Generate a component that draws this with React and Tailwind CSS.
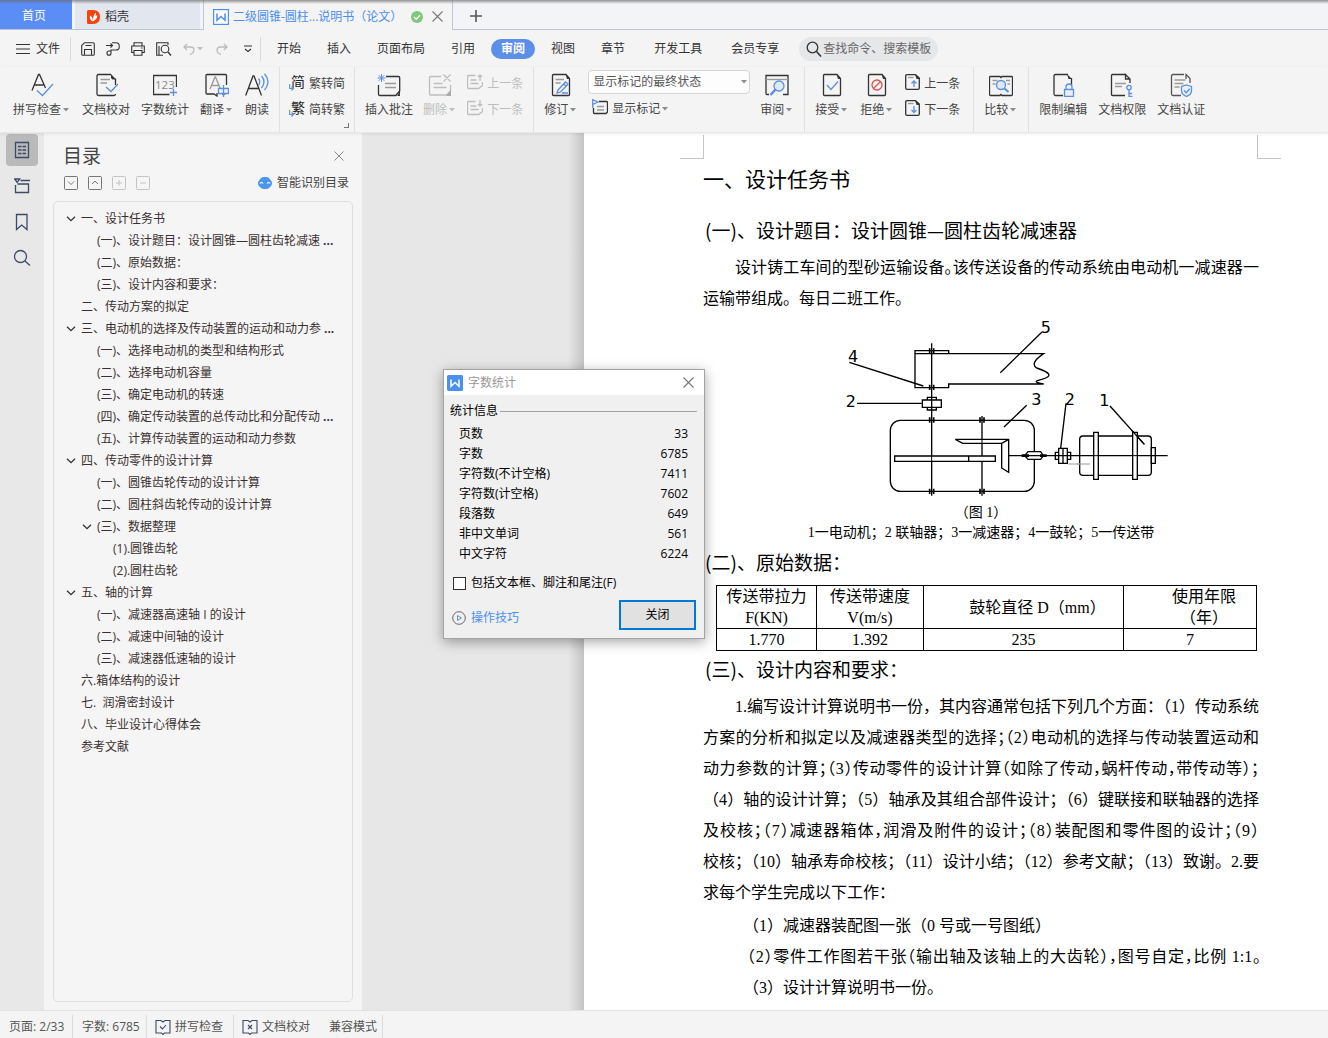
import React from "react";

const UI = "font-['Open_Sans','Noto_Sans_CJK_SC',sans-serif]";
const DARK = "#333";
const GRAY = "#9a9a9a";
const BLUE = "#5b8fe0";

function Svg({ w = 24, h = 24, children, className = "" }) {
  return (
    <svg width={w} height={h} viewBox={`0 0 ${w} ${h}`} fill="none" stroke={DARK} strokeWidth="1.3" aria-hidden="true" className={`shrink-0 ${className}`}>
      {children}
    </svg>
  );
}

function Caret({ muted }) {
  return (
    <span className="flex w-[10px] justify-center">
      <svg width="6" height="4" viewBox="0 0 6 4" aria-hidden="true"><path d="M0 0h6L3 3.5z" fill={muted ? "#c0c0c0" : "#8c8c8c"} /></svg>
    </span>
  );
}

function PageOutline({ x = 3, w = 18, color = DARK }) {
  const r = x + w;
  return (
    <>
      <path d={`M${r - 4} 1.5H${x + 1.5}q-1 0-1 1v19q0 1 1 1H${r - 1.5}q1 0 1-1V5.5z`} stroke={color} />
      <path d={`M${r - 4.5} 1l4.5 5h-3q-1.500-1.500z`} fill={color} stroke="none" />
    </>
  );
}

const icons = {
  spell: <Svg><path d="M2 17.500 8.500 1.500h1L15.500 15M4.500 12h9" /><path d="m7 17.500 5.500 5L23 11" stroke={BLUE} /></Svg>,
  proof: <Svg><path d="M17 1.500H4.500q-1.500 0-1.500 1.500v18q0 1.500 1.500 1.500H20q1.500 0 1.500-1.500M21.500 12V5.500" /><path d="m17 1 5 5.500h-3.500L17 5z" fill={DARK} stroke="none" /><path d="M6.500 6.500H16M6.500 10H13" stroke={GRAY} /><path d="m12 14 5 4.500 7-7.500" stroke={BLUE} /></Svg>,
  count: (
    <Svg><path d="M23.500 14V2.500h-23v19h16" /><text x="2" y="15.500" fontSize="11.500" fill="#8a8a8a" stroke="none" fontFamily="Open Sans, sans-serif">123</text><path d="M20.500 16v7M17 19.500h7" stroke={BLUE} /></Svg>
  ),
  translate: (
    <Svg><path d="M21.500 12V2.500q0-1-1-1H2q-1 0-1 1V20q0 1 1 1h7l3 2v-3M17 21h3" /><path d="m5 16 5-12h.500l4.500 11M6.500 12.500h7" stroke={GRAY} /><path d="M13.500 15.500h10v5h-10zM18.500 12v12" stroke={BLUE} /></Svg>
  ),
  read: <Svg><path d="M.7 22.500 8 3h1l7.500 19.500M3.500 15.500h10" /><path d="M13.500 5.500q2.500 3 0 7M16.500 3q5 5.500 0 12M19.500.7q7 8 0 16.500" stroke={BLUE} /></Svg>,
  addNote: <Svg><path d="M9 3.500h12.500q1.200 0 1.200 1.200V18l-4 4.500H3q-1.500 0-1.500-1.500v-9" /><path d="M23 17.500v5.500h-5q4 0 3.500-3.500z" fill={DARK} stroke="none" /><path d="M8 10.500h11M8 14.500h11" stroke={GRAY} /><path d="M4.500 1v8M.5 5h8M1.700 2.200l5.600 5.600M7.300 2.200 1.700 7.800" stroke={BLUE} strokeWidth="1" /></Svg>,
  del: <Svg><g stroke="#bdbdbd"><path d="M13 3.500H2.500q-1 0-1 1V21q0 1 1 1h16l4-4v-6M5.500 10.500h9M5.500 14.500h13M15.500 1.500l7 7M22.500 1.500l-7 7" /></g><path d="M23 17v6h-5z" fill="#aaa" stroke="none" /></Svg>,
  revise: <Svg><PageOutline /><path d="M6.500 6.500H15M6.500 10h5" stroke={GRAY} /><path d="m9 17 7.500-8 2.500 2.300L11.500 19l-3.500 1zM14.700 11l2.500 2.300M13 20h6" stroke={BLUE} /></Svg>,
  review: <Svg><path d="M4 21.500H2q-1 0-1-1v-18h22v19h-5" /><path d="M1 6.500h22" stroke={GRAY} /><circle cx="14" cy="13" r="5" stroke={BLUE} fill="#dfe9f8" /><path d="m10.500 16.500-5 5.500" stroke={BLUE} strokeWidth="2.500" /></Svg>,
  accept: <Svg><PageOutline /><path d="m7 12 4 4.500 7-8" stroke={BLUE} /></Svg>,
  reject: <Svg><PageOutline /><circle cx="12" cy="12" r="5" stroke="#d9534f" /><path d="m8.500 15.500 7-7" stroke="#d9534f" /></Svg>,
  compare: <Svg><path d="M11 3.500l1 1 1-1h9.500q1 0 1 1v17q0 1-1 1H13l-1-1-1 1H1.500q-1 0-1-1v-17q0-1 1-1z" /><path d="M3.500 7.500h5M3.500 11h3M17 7.500h4M18.500 11h2.500" stroke={GRAY} /><circle cx="12" cy="12" r="4.500" stroke={BLUE} fill="#dfe9f8" /><path d="m15.500 15.500 4 3.500" stroke={BLUE} strokeWidth="2" /></Svg>,
  restrict: <Svg><path d="M17 1.500H4.500q-1.500 0-1.500 1.500v18q0 1.500 1.500 1.500H12M20.500 12V5" /><path d="m16 1 5 5h-3.500z" fill={DARK} stroke="none" /><path d="M13.500 16.500h9v7h-9zM15 16.500v-2.500q0-3 3-3t3 3v2.500" stroke={BLUE} fill="#eaf1fb" /></Svg>,
  rights: <Svg><path d="M15 1.500H2.500q-1 0-1 1v19q0 1 1 1H15M20 10V6l-4.500-4.500V6H20" /><path d="M5 10.500h11M5 13.500h7" stroke={GRAY} /><circle cx="19" cy="14.500" r="2.200" stroke={BLUE} /><path d="M19 17v6.500h3.500M19 20.500h3" stroke={BLUE} /></Svg>,
  certify: <Svg><path d="M15 1.500H4q-1.500 0-1.500 1.500v18q0 1.500 1.500 1.500h8M21 10V5.500L17 1.500V6" stroke="#555" /><path d="M5.500 7h11M5.500 10.500h9M5.500 14h5" stroke={GRAY} /><path d="m17.500 12 5 1.500v4q0 4-5 6-5-2-5-6v-4z" stroke={BLUE} fill="#eaf1fb" /><path d="m15 17.500 2.200 2.200 3.500-4" stroke={BLUE} /></Svg>,
};

function BigButton({ icon, label, caret, muted }) {
  return (
    <button className={`flex shrink-0 flex-col items-center gap-[3px] ${muted ? "text-[#bdbdbd]" : "text-[#444]"}`}>
      {icons[icon]}
      <span className="flex items-center whitespace-nowrap text-xs leading-5">{label}{caret && <Caret muted={muted} />}</span>
    </button>
  );
}

function SmallButton({ icon, label, caret, muted }) {
  return (
    <button className={`flex h-[26px] items-center gap-1 whitespace-nowrap text-xs ${muted ? "text-[#bdbdbd]" : "text-[#444]"}`}>
      {icon}
      <span className="flex items-center pt-1">{label}{caret && <Caret />}</span>
    </button>
  );
}

const Sep = () => <span className="w-px self-stretch bg-[#e0e0e0]" />;

function GlyphIcon({ ch }) {
  return (
    <Svg w={16} h={18} className="overflow-visible">
      <text x="2" y="14" fontSize="14" fill="#222" stroke="none" fontFamily="Noto Sans CJK SC, sans-serif">{ch}</text>
      <path d="M.7 11v4.500H4M2.500 13.500l2 2-2 2" stroke={BLUE} strokeWidth="1.100" />
    </Svg>
  );
}

function NoteArrow({ up }) {
  return (
    <Svg w={16} h={16}>
      <g stroke="#bdbdbd"><path d="M8.500 1.500h-7q-1 0-1 1v11q0 1 1 1h10l4-3V8M3.500 6h6M3.500 9.500h8" /><path d={up ? "M13 7V1M11 3l2-2 2 2" : "M13 0v6M11 4l2 2 2-2"} /></g>
    </Svg>
  );
}

function PageArrow({ up }) {
  return (
    <Svg w={15} h={16}>
      <path d="M10.500.7H2q-1.300 0-1.300 1.300v12q0 1.300 1.300 1.300h11q1.300 0 1.300-1.300V4z" />
      <path d="m10 0 5 5h-3.500z" fill={DARK} stroke="none" />
      <path d="M3 3.500h5.500" stroke={GRAY} />
      <path d={up ? "M9 13V7M6.500 9.500 9 7l2.500 2.500" : "M9 6v6.500M6.500 10 9 12.500l2.500-2.500"} stroke={BLUE} />
    </Svg>
  );
}

function WLogo({ filled }) {
  return (
    <svg width="16" height="16" viewBox="0 0 16 16" aria-hidden="true" className="shrink-0">
      <rect x=".6" y=".6" width="14.800" height="14.800" rx={filled ? 1 : 0} fill={filled ? "#4b8ff0" : "#fff"} stroke="#4b8ff0" strokeWidth="1.200" />
      <path d="M4 4.500v6.800L8 7.500l4 3.800V4.500" fill="none" stroke={filled ? "#fff" : "#4b8ff0"} strokeWidth="1.500" />
    </svg>
  );
}

function Cross({ size = 11, color = "#777" }) {
  return <svg width={size} height={size} viewBox="0 0 11 11" stroke={color} strokeWidth="1.100" aria-hidden="true"><path d="M.5.5l10 10M10.500.5l-10 10" /></svg>;
}

function TabBar() {
  return (
    <div className="relative flex h-[30px] shrink-0 bg-[#f3f4f8] text-xs">
      <button className="mb-px w-[72px] bg-[#5b8df6] pr-1 pt-[3px] text-white">首页</button>
      <button className="ml-[3px] mb-px flex w-[125px] items-center gap-[5px] bg-[#e2e6ef] pl-3 pt-1 text-[#333]">
        <svg width="13" height="16" viewBox="0 0 13 16" aria-hidden="true"><path d="M1.500 1H6q7 0 7 7t-7 7H1.500Q0 15 0 13.500v-11Q0 1 1.500 1z" fill="#f8420b" /><path d="M5.500 12.500Q2 10 3 6.500q2.500 1 2.800 5Q6 6 9 3.500q.2 2-.6 3.300l2-.3q-.5 4.500-4.900 6z" fill="#fff" /></svg>
        稻壳
      </button>
      <div className="ml-[3px] flex w-[250px] items-center border-x border-[#c0c5da] bg-[#f4f4f4] pl-[9px] pt-[3px] text-[#4b8ff0]">
        <WLogo />
        <span className="ml-[4px] w-[170px] whitespace-nowrap">二级圆锥-圆柱...说明书（论文）</span>
        <svg width="12" height="12" viewBox="0 0 12 12" className="ml-[8px] shrink-0" aria-hidden="true"><circle cx="6" cy="6" r="6" fill="#7fc77b" /><path d="m3 6 2.200 2.300L9 4.300" fill="none" stroke="#fff" strokeWidth="1.300" /></svg>
        <button aria-label="关闭标签" className="ml-[9px]"><Cross /></button>
      </div>
      <button aria-label="新建" className="pl-[17px] pt-[2px]"><svg width="12" height="12" viewBox="0 0 12 12" stroke="#555" strokeWidth="1.600" aria-hidden="true"><path d="M6 0v12M0 6h12" /></svg></button>
      <div className="absolute inset-x-0 top-0 h-[4px] bg-linear-to-b from-[#6b6b6b]/70 to-transparent" />
      <div className="absolute bottom-0 left-0 h-px w-[204px] bg-[#bcc2d8]" />
      <div className="absolute bottom-0 left-[453px] right-0 h-px bg-[#bcc2d8]" />
    </div>
  );
}

const quick = [
  ["保存", <Svg w={14} h={14}><path d="M.7 12V3.500L3.500.7h8.500q1.300 0 1.300 1.300v10q0 1.300-1.300 1.300H2Q.7 13.300.7 12zM3.500 13V7.500h7V13M4.500 3.500h6M10.500 9.500v1" strokeWidth="1.100" /></Svg>],
  ["输出", <Svg w={14} h={14}><path d="M2 3.500H6M4.500 1.500l2 2-2 2M6 .8h4q3.300 0 3.300 3.600T10 8H5v3q0 2.300-2 2.300T1 11q0-2 2-2h2M0 3.500h2" strokeWidth="1.100" /></Svg>],
  ["打印", <Svg w={14} h={14}><path d="M3 4V.7h8V4M3 10.500H.7V4h12.600v6.500H11M3 8.500h8v4.800H3zM10 6h1.500" strokeWidth="1.100" /></Svg>],
  ["打印预览", <Svg w={16} h={14}><path d="M12 3V.7H.7v12.600H7M3 13V4" strokeWidth="1.100" /><circle cx="9" cy="7" r="3.800" strokeWidth="1.100" /><path d="m12 10 3 3.500" /></Svg>],
];
const menus = ["开始", "插入", "页面布局", "引用", "审阅", "视图", "章节"];

function MenuBar() {
  return (
    <div className="flex h-[37px] shrink-0 items-center pl-4 text-xs text-[#333]">
      <button className="flex items-center gap-[6px]"><Svg w={14} h={12}><path d="M0 1.500h14M0 6h14M0 10.500h14" strokeWidth="1" /></Svg>文件</button>
      <span className="ml-[10px] h-6 w-px bg-[#d9d9d9]" />
      <div className="ml-[10px] flex items-center gap-[11px]">
        {quick.map(([name, icon]) => <button key={name} aria-label={name}>{icon}</button>)}
        <button aria-label="撤销" className="flex items-center"><Svg w={12} h={12}><g stroke="#bcbcbc"><path d="M1 4h6.500Q11 4 11 7t-4 4.500M4 1 1 4l3 3" /></g></Svg><Caret muted /></button>
        <button aria-label="恢复"><Svg w={12} h={12}><g stroke="#bcbcbc"><path d="M11 4H4.500Q1 4 1 7t4 4.500M8 1l3 3-3 3" /></g></Svg></button>
        <button aria-label="更多" className="ml-[5px]"><Svg w={8} h={8}><path d="M0 1h8M1 4l3 2.500L7 4" strokeWidth="1.100" /></Svg></button>
      </div>
      <span className="ml-[8px] h-6 w-px bg-[#d9d9d9]" />
      <nav className="ml-[6px] flex items-center gap-[6px] pt-px">
        {menus.map((m) => (
          <button key={m} className={m === "审阅" ? "h-5 rounded-full bg-[#5b8fe8] px-[10px] font-bold text-white" : "h-5 px-[10px]"}>{m}</button>
        ))}
        <button className="ml-[3px] px-[10px]">开发工具</button>
        <button className="ml-[3px] px-[10px]">会员专享</button>
      </nav>
      <label className="ml-[10px] flex h-6 w-[139px] items-center rounded-full bg-[#e6e7e9] pl-[7px]">
        <Svg w={16} h={16}><circle cx="6.500" cy="6.500" r="5.300" /><path d="m10.500 10.500 4.500 5" strokeWidth="1.600" /></Svg>
        <input aria-label="查找命令" placeholder="查找命令、搜索模板" className="w-28 bg-transparent pl-px text-xs outline-none placeholder:text-[#666]" />
      </label>
    </div>
  );
}

function Ribbon() {
  return (
    <div className="relative z-10 flex h-[66px] shrink-0 border-b border-[#e8e8e8] bg-[#f4f4f4] shadow-[0_1px_3px_rgba(0,0,0,0.08)]">
      <div className="flex items-start gap-[11px] pl-[13px] pr-[10px] pt-[6px]">
        <BigButton icon="spell" label="拼写检查" caret /><BigButton icon="proof" label="文档校对" /><BigButton icon="count" label="字数统计" /><BigButton icon="translate" label="翻译" caret /><BigButton icon="read" label="朗读" />
      </div>
      <Sep />
      <div className="relative flex flex-col pl-[9px] pr-[9px] pt-[2px]">
        <SmallButton icon={<GlyphIcon ch="简" />} label="繁转简" />
        <SmallButton icon={<GlyphIcon ch="繁" />} label="简转繁" />
        <span className="absolute bottom-[4px] right-[5px] h-[5px] w-[5px] border-b border-r border-[#777]" />
      </div>
      <Sep />
      <div className="flex items-start gap-[10px] pl-[10px] pr-[10px] pt-[6px]">
        <BigButton icon="addNote" label="插入批注" /><BigButton icon="del" label="删除" caret muted />
        <div className="-mt-1 flex flex-col"><SmallButton icon={<NoteArrow up />} label="上一条" muted /><SmallButton icon={<NoteArrow />} label="下一条" muted /></div>
      </div>
      <Sep />
      <div className="flex items-start gap-[10px] px-[10px] pt-[6px]">
        <BigButton icon="revise" label="修订" caret />
        <div className="-mt-[3px] flex flex-col">
          <span className="relative flex items-center">
            <select aria-label="标记显示状态" className="h-6 w-[162px] appearance-none rounded border border-[#d5d5d5] bg-[#fdfdfd] px-1 text-xs text-[#555]"><option>显示标记的最终状态</option></select>
            <span className="pointer-events-none absolute right-px"><Caret /></span>
          </span>
          <span className="pl-1"><SmallButton icon={<Svg w={16} h={16}><path d="M7 2.500h7.500q1 0 1 1V13l-1.500 1.500H2.500q-1 0-1-1V9" /><path d="M5 7.500h7M5 11h7" stroke={GRAY} /><path d="M.7 9V.7L6 3 .7 5.500" stroke={BLUE} /></Svg>} label="显示标记" caret /></span>
        </div>
        <BigButton icon="review" label="审阅" caret />
      </div>
      <Sep />
      <div className="flex items-start gap-[11px] pl-[10px] pr-[13px] pt-[6px]">
        <BigButton icon="accept" label="接受" caret /><BigButton icon="reject" label="拒绝" caret />
        <div className="-mt-1 flex flex-col"><SmallButton icon={<PageArrow up />} label="上一条" /><SmallButton icon={<PageArrow />} label="下一条" /></div>
      </div>
      <Sep />
      <div className="flex items-start px-[10px] pt-[6px]"><BigButton icon="compare" label="比较" caret /></div>
      <Sep />
      <div className="flex items-start gap-[11px] px-[10px] pt-[6px]"><BigButton icon="restrict" label="限制编辑" /><BigButton icon="rights" label="文档权限" /><BigButton icon="certify" label="文档认证" /></div>
    </div>
  );
}

function Rail() {
  const s = "#3d4a66";
  return (
    <div className="flex w-11 shrink-0 flex-col items-center gap-1 bg-[#e8e8e8] pt-px">
      <button aria-label="目录" className="flex h-8 w-8 items-center justify-center rounded bg-[#bababa]"><Svg w={16} h={18}><g stroke={s}><path d="M1.500 1.500h13v15h-13zM4 5.500h3.500M8.500 5.500H12M4 9h3.500M8.500 9H12M4 12.500h3.500M8.500 12.500H12" /></g></Svg></button>
      <button aria-label="章节" className="flex h-8 w-8 items-center justify-center"><Svg w={16} h={16}><g stroke={s}><path d="M6.500 2.500H16M1.500 7v7.500h13V6h-11M.7 1h5L3.200 4.500z" /></g></Svg></button>
      <button aria-label="书签" className="flex h-8 w-8 items-center justify-center"><Svg w={14} h={18}><path d="M1.500 1.500h10.500v15L6.700 12 1.500 16.500z" stroke={s} /></Svg></button>
      <button aria-label="查找" className="flex h-8 w-8 items-center justify-center"><Svg w={18} h={18}><g stroke={s}><circle cx="7.500" cy="7.500" r="6" /><path d="m12 12 5 4.500" /></g></Svg></button>
    </div>
  );
}

const toc = [
  [0, 1, "一、设计任务书"], [1, 0, "(一)、设计题目：设计圆锥—圆柱齿轮减速", 1], [1, 0, "(二)、原始数据："], [1, 0, "(三)、设计内容和要求："],
  [0, 0, "二、传动方案的拟定"], [0, 1, "三、电动机的选择及传动装置的运动和动力参", 1], [1, 0, "(一)、选择电动机的类型和结构形式"], [1, 0, "(二)、选择电动机容量"],
  [1, 0, "(三)、确定电动机的转速"], [1, 0, "(四)、确定传动装置的总传动比和分配传动", 1], [1, 0, "(五)、计算传动装置的运动和动力参数"], [0, 1, "四、传动零件的设计计算"],
  [1, 0, "(一)、圆锥齿轮传动的设计计算"], [1, 0, "(二)、圆柱斜齿轮传动的设计计算"], [1, 1, "(三)、数据整理"], [2, 0, "(1).圆锥齿轮"], [2, 0, "(2).圆柱齿轮"],
  [0, 1, "五、轴的计算"], [1, 0, "(一)、减速器高速轴 I 的设计"], [1, 0, "(二)、减速中间轴的设计"], [1, 0, "(三)、减速器低速轴的设计"],
  [0, 0, "六.箱体结构的设计"], [0, 0, "七.  润滑密封设计"], [0, 0, "八、毕业设计心得体会"], [0, 0, "参考文献"],
];
const indent = ["pl-3", "pl-7", "pl-11"];
const tools = [["展开", "m4 5.500 3 3 3-3"], ["收起", "m4 8 3-3 3 3"], ["升级", "M7 4v6M4 7h6", 1], ["降级", "M4 7h6", 1]];

function Outline() {
  return (
    <aside className="flex w-[318px] shrink-0 flex-col bg-[#f5f5f5] px-[9px] pb-[8px]">
      <div className="flex h-[39px] items-end justify-between pl-[10px] pr-[9px]">
        <h2 className="text-[19px] leading-8 text-[#444]">目录</h2>
        <button aria-label="关闭目录" className="pb-[11px]"><Cross size={10} color="#888" /></button>
      </div>
      <div className="flex h-[29px] items-center justify-between pl-[11px] pr-[4px] pb-2">
        <div className="flex gap-[10px]">
          {tools.map(([n, d, m]) => <button key={n} aria-label={n}><Svg w={14} h={14}><g stroke={m ? "#c4c4c4" : "#777"} strokeWidth="1"><rect x=".5" y=".5" width="13" height="13" rx="1" /><path d={d} /></g></Svg></button>)}
        </div>
        <button className="flex items-center gap-1 text-xs text-[#444]">
          <svg width="16" height="14" viewBox="0 0 16 14" aria-hidden="true"><rect x="3" y="1" width="10" height="12" rx="4" fill="#4a97ee" /><rect x="1" y="2.500" width="14" height="9.500" rx="4.700" fill="#4a97ee" /><path d="M3 7.500q1.500-2 3 0M10 7.500q1.500-2 3 0" stroke="#fff" fill="none" strokeWidth="1.200" /></svg>
          智能识别目录
        </button>
      </div>
      <ul className="flex-1 rounded-[5px] border border-[#dedede] pt-[6px] text-xs text-[#3a3030]">
        {toc.map(([level, open, text, cut], i) => (
          <li key={i} className={`flex h-[22px] items-center whitespace-pre ${indent[level]}`}>
            <span className="flex w-[15px] items-center">{open ? <Svg w={10} h={6}><path d="m1 .7 4 4 4-4" /></Svg> : null}</span>
            <a href="#" className="flex items-center">{text}{cut ? <b className="pl-[3px]">...</b> : null}</a>
          </li>
        ))}
      </ul>
    </aside>
  );
}

function Drawing() {
  return (
    <svg width="325" height="180" viewBox="465 24 975 540" fill="none" stroke="#000" strokeWidth="4" role="img" aria-label="传动系统简图" className="ml-[142px] block">
      <g fill="#000" stroke="none" fontSize="48" fontFamily="DejaVu Sans, sans-serif">
        <text x="1052" y="68">5</text><text x="474" y="156">4</text><text x="467" y="292">2</text><text x="1024" y="285">3</text><text x="1124" y="285">2</text><text x="1228" y="288">1</text>
      </g>
      <path d="M1056 66 931 188M478 157 700 228M501 280H695M1010 286 942 351M1128 280 1112 415M1260 288 1363 403" />
      <path d="M776 131V122H675V233H776V222H1061M675 131H1061Q1018 160 1040 174Q1105 195 1055 208Q1020 216 1061 222" />
      <path d="M725 100V557M876 318V557" />
      <path d="M697 270H754V292H697zM712 262H739V270H712zM712 292H739V300H712z" />
      <rect x="601" y="331" width="432" height="213" rx="30" />
      <path d="M614 438H916V454H614zM836 438V454" fill="#fff" />
      <path d="M796 388H956V487L935 474V400H818zM935 400 956 388" fill="#fff" />
      <path d="M876 388V400M725 438V454" strokeWidth="3" />
      <path d="M719 115v16m0 93v16m0 82v16m0 198v16M731 115v16m0 93v16m0 82v16m0 198v16M870 322v16m0 198v16M882 322v16m0 198v16" strokeWidth="5" />
      <path d="M1014 425H1052L1060 437 1052 448H1014L1004 437z" fill="#fff" />
      <path d="M995 437h22M1050 437h20" strokeWidth="8" />
      <path d="M956 437H1433" />
      <path d="M1106 415H1132V460H1106zM1119 415V460M1096 427H1106V448H1096zM1132 427H1142V448H1132z" />
      <rect x="1169" y="378" width="215" height="118" rx="10" />
      <path d="M1384 413H1396V460H1384z" />
      <path d="M1211 367H1225V508H1211zM1328 367H1342V508H1328z" fill="#fff" />
      <path d="M1211 437h14M1328 437h14" strokeWidth="3" />
      <path d="M1326 362 1363 403" />
      <path d="M1135 462H1200M1162 462h10" stroke="#999" strokeWidth="3" />
    </svg>
  );
}

const halt = "[font-feature-settings:'halt'] [text-spacing-trim:space-all]";
const Full = ({ children, first, tight }) => <span className={`block whitespace-nowrap [text-align-last:justify] ${tight ? halt : ""} ${first ? "pl-8" : ""}`}>{children}</span>;
const H2 = ({ n, children, className }) => (
  <h2 className={`h-[31px] whitespace-nowrap pl-[2px] font-['Noto_Sans_CJK_SC',sans-serif] text-[19px] leading-[27px] ${className}`}>({n})、{children}</h2>
);
const cell = "border border-black p-0 text-center align-middle font-normal";

function Page() {
  return (
    <article className="min-w-0 flex-1 overflow-hidden bg-white pl-[96px] font-['Liberation_Serif','Noto_Sans_CJK_SC',serif] text-base leading-[31px] text-black">
      <div className="mt-[2px] flex h-6 justify-between pr-[47px]">
        <span className="w-6 border-b border-r border-[#c4c4c4]" /><span className="w-6 border-b border-l border-[#c4c4c4]" />
      </div>
      <div className="ml-[23px] w-[556px]">
        <h1 className="h-[42px] text-[21px] leading-[42px]">一、设计任务书</h1>
        <H2 n="一" className="mt-[15px]">设计题目：设计圆锥—圆柱齿轮减速器</H2>
        <p className="mt-[5px]"><Full first tight>设计铸工车间的型砂运输设备。该传送设备的传动系统由电动机一减速器一</Full>运输带组成。每日二班工作。</p>
        <figure className="mt-1">
          <Drawing />
          <figcaption className="mt-[5px] text-center text-sm leading-5"><span>（图 1）</span><br />1一电动机；2 联轴器；3一减速器；4一鼓轮；5一传送带</figcaption>
        </figure>
        <H2 n="二" className="mt-[5px]">原始数据：</H2>
        <table className="ml-[13px] mt-[6px] w-[540px] table-fixed border-collapse leading-[21px]">
          <colgroup><col className="w-[100px]" /><col className="w-[107px]" /><col className="w-[200px]" /><col className="w-[133px]" /></colgroup>
          <thead><tr className="h-[42px]"><th className={cell}>传送带拉力<br />F(KN)</th><th className={cell}>传送带速度<br />V(m/s)</th><th className={`${cell} pl-7`}>鼓轮直径 D（mm）</th><th className={`${cell} pl-7`}>使用年限<br />（年）</th></tr></thead>
          <tbody><tr className="h-[21px]"><td className={cell}>1.770</td><td className={cell}>1.392</td><td className={cell}>235</td><td className={cell}>7</td></tr></tbody>
        </table>
        <H2 n="三" className="mt-1">设计内容和要求：</H2>
        <p className="mt-[5px]">
          <Full first>1.编写设计计算说明书一份，其内容通常包括下列几个方面：（1）传动系统</Full>
          <Full tight>方案的分析和拟定以及减速器类型的选择；（2）电动机的选择与传动装置运动和</Full>
          <Full tight>动力参数的计算；（3）传动零件的设计计算（如除了传动，蜗杆传动，带传动等）；</Full>
          <Full>（4）轴的设计计算；（5）轴承及其组合部件设计；（6）键联接和联轴器的选择</Full>
          <Full tight>及校核；（7）减速器箱体，润滑及附件的设计；（8）装配图和零件图的设计；（9）</Full>
          <Full>校核；（10）轴承寿命校核；（11）设计小结；（12）参考文献；（13）致谢。2.要</Full>
          求每个学生完成以下工作：
        </p>
        <ol className="mt-[2px] whitespace-nowrap pl-10">
          <li>（1）减速器装配图一张（0 号或一号图纸）</li>
          <li className={`ml-1 w-[514px] [text-align-last:justify] ${halt}`}>（2）零件工作图若干张（输出轴及该轴上的大齿轮），图号自定，比例 1:1。</li>
          <li>（3）设计计算说明书一份。</li>
        </ol>
      </div>
    </article>
  );
}

const stats = [["页数", 33], ["字数", 6785], ["字符数(不计空格)", 7411], ["字符数(计空格)", 7602], ["段落数", 649], ["非中文单词", 561], ["中文字符", 6224]];

function Dialog() {
  return (
    <div role="dialog" aria-label="字数统计" className="absolute left-[443px] top-[369px] z-20 w-[262px] border border-[#a3a3a3] bg-[#f0f0f0] pb-2 text-xs text-black shadow-[0_3px_12px_rgba(0,0,0,0.35)]">
      <div className="flex h-[25px] items-center bg-white pl-[3px] pr-[10px] text-[#999]"><WLogo filled /><span className="ml-[5px] flex-1">字数统计</span><button aria-label="关闭窗口"><Cross /></button></div>
      <div className="mt-[6px] flex h-5 items-center gap-[2px] pl-[6px] pr-[7px]">统计信息<span className="h-px flex-1 bg-[#a0a0a0]" /></div>
      <dl className="mt-[3px] pl-[15px] pr-[16px]">
        {stats.map(([k, v]) => <div key={k} className="flex h-5 items-center justify-between"><dt>{k}</dt><dd>{v}</dd></div>)}
      </dl>
      <label className="mt-[9px] flex h-5 items-center gap-[5px] pl-[9px]"><input type="checkbox" className="h-[13px] w-[13px] appearance-none border border-[#333] bg-white" />包括文本框、脚注和尾注(F)</label>
      <div className="mt-[7px] flex items-center justify-between pl-[8px] pr-[8px]">
        <a href="#" className="flex items-center gap-[5px] pt-[6px] text-[#4b8ff0]"><Svg w={14} h={14}><circle cx="7" cy="7" r="6.300" stroke="#666" strokeWidth="1" /><path d="M5.500 4.500v5L9.500 7z" stroke={BLUE} strokeWidth="1" /></Svg>操作技巧</a>
        <button className="h-[30px] w-[77px] border-2 border-[#0078d7] bg-[#e1e1e1]">关闭</button>
      </div>
    </div>
  );
}

function BookIcon({ d }) {
  return <Svg w={16} h={16}><g stroke="#3d4a66" strokeWidth="1.100"><path d="M6 1.500H1v12.500h5.500L8 15.500 9.500 14H15V1.500h-5L8 3z" /><path d={d} /></g></Svg>;
}

function StatusBar() {
  const item = "flex items-center gap-1 border-r border-[#dcdcdc]";
  return (
    <footer className="flex h-[28px] shrink-0 items-stretch border-t border-[#e2e2e2] bg-[#f4f4f4] pt-1 text-xs text-[#555]">
      <span className={`${item} w-[73px] pl-[9px]`}>页面: 2/33</span>
      <span className={`${item} w-[74px] pl-[9px]`}>字数: 6785</span>
      <button className={`${item} w-[87px] pl-[8px]`}><BookIcon d="m5 7.500 2.500 2.500L11 6" />拼写检查</button>
      <button className="flex w-[86px] items-center gap-1 pl-[8px]"><BookIcon d="m6 6 4 4M10 6l-4 4" />文档校对</button>
      <span className={`${item} w-[63px] pl-[9px]`}>兼容模式</span>
    </footer>
  );
}

export default function App() {
  return (
    <div className={`relative flex h-screen flex-col overflow-hidden bg-[#f4f4f4] ${UI}`}>
      <TabBar />
      <MenuBar />
      <Ribbon />
      <main className="flex min-h-0 flex-1 overflow-hidden">
        <Rail />
        <Outline />
        <div className="flex min-w-0 flex-1 bg-[#e7e7e7] pl-[206px]">
          <span className="w-4 shrink-0 bg-linear-to-r from-transparent to-[#c4c4c4]" />
          <Page />
        </div>
      </main>
      <Dialog />
      <StatusBar />
    </div>
  );
}
